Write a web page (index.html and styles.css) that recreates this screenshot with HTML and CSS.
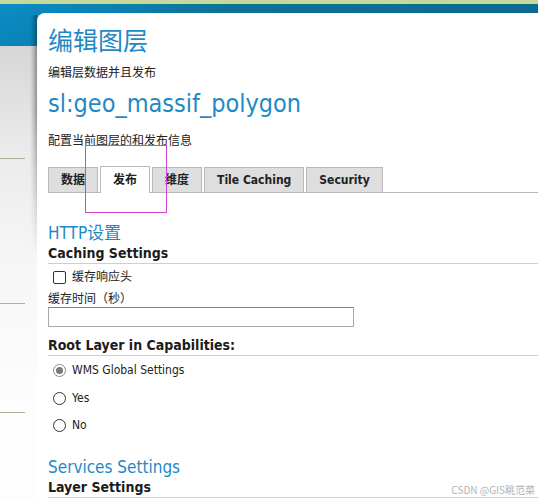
FILE: index.html
```html
<!DOCTYPE html>
<html lang="zh">
<head>
<meta charset="utf-8">
<title>编辑图层</title>
<link rel="stylesheet" href="styles.css">
</head>
<body>
<div class="top-strip"></div>
<div class="header"></div>
<div class="layout">
  <aside class="sidebar">
    <div class="rule r1"></div>
    <div class="rule r2"></div>
    <div class="rule r3"></div>
  </aside>
  <main class="panel">
    <h1 class="title">编辑图层</h1>
    <p class="sub s1">编辑层数据并且发布</p>
    <h2 class="layer-name">sl:geo_massif_polygon</h2>
    <p class="sub s2">配置当前图层的和发布信息</p>
    <div class="tabs">
      <div class="tab">数据</div>
      <div class="tab active">发布</div>
      <div class="tab">维度</div>
      <div class="tab">Tile Caching</div>
      <div class="tab">Security</div>
    </div>
    <h3 class="section http">HTTP设置</h3>
    <h4 class="group">Caching Settings</h4>
    <div class="check-row"><span class="checkbox"></span><span class="label">缓存响应头</span></div>
    <div class="field-label">缓存时间（秒）</div>
    <div class="text-input"></div>
    <h4 class="group root">Root Layer in Capabilities:</h4>
    <div class="radio-row r-1"><span class="radio checked"></span><span class="label">WMS Global Settings</span></div>
    <div class="radio-row r-2"><span class="radio"></span><span class="label">Yes</span></div>
    <div class="radio-row r-3"><span class="radio"></span><span class="label">No</span></div>
    <h3 class="section services">Services Settings</h3>
    <h4 class="group layer">Layer Settings</h4>
  </main>
</div>
<div class="highlight"></div>
<div class="watermark">CSDN @GIS眺范菜</div>
</body>
</html>
```
FILE: styles.css
```css
* { box-sizing: border-box; }
html, body { margin: 0; padding: 0; }
body {
  width: 538px;
  height: 501px;
  overflow: hidden;
  position: relative;
  font-family: "DejaVu Sans Condensed", "DejaVu Sans", "Noto Sans CJK SC", sans-serif;
  color: #222;
  background: linear-gradient(to bottom, #d6d6d6 46px, #e9e9e9 140px, #f6f6f6 260px, #fdfdfd 400px);
}
.top-strip {
  height: 4px;
  background: #c6d99b;
}
.header {
  height: 42px;
  background:
    linear-gradient(to bottom, rgba(0,0,0,0) 0, rgba(0,0,0,0.06) 100%),
    linear-gradient(to right, #0a8dc4 0, #0a84b8 90px, #0d7398 220px, #0b6b90 100%);
}
.layout {
  display: flex;
  margin-top: -33px;
}
.sidebar {
  width: 37px;
  flex: none;
  display: flex;
  flex-direction: column;
}
.rule {
  width: 25px;
  height: 1px;
  background: #a9b198;
}
.r1 { margin-top: 145px; }
.r2 { margin-top: 144px; }
.r3 { margin-top: 108px; }

.panel {
  flex: 1;
  position: relative;
  background: #fff;
  border-top-left-radius: 8px;
  padding: 11px 0 0 11px;
  height: 488px;
}
.panel::before {
  content: "";
  position: absolute;
  left: -7px;
  top: 2px;
  width: 7px;
  height: 240px;
  background: linear-gradient(to right, rgba(0,0,0,0) 0, rgba(0,0,0,0.14) 50%, rgba(0,0,0,0.36) 100%);
  -webkit-mask-image: linear-gradient(to bottom, #000 0, #000 40%, transparent 100%);
  mask-image: linear-gradient(to bottom, #000 0, #000 40%, transparent 100%);
}
.title {
  margin: 0;
  font-family: "Noto Sans CJK SC", sans-serif;
  font-weight: normal;
  font-size: 25px;
  line-height: 30px;
  color: #1f89c6;
}
.sub {
  margin: 0;
  font-family: "Noto Sans CJK SC", sans-serif;
  font-size: 12px;
  line-height: 16px;
  color: #222;
}
.s1 { margin-top: 10px; }
.layer-name {
  margin: 9px 0 0;
  font-weight: normal;
  font-size: 25px;
  line-height: 30px;
  color: #1f89c6;
}
.s2 { margin-top: 13px; }

.tabs {
  margin-top: 18px;
  height: 27px;
  display: flex;
  align-items: flex-end;
  gap: 2px;
  border-bottom: 1px solid #b9b9b9;
}
.tab {
  height: 25px;
  padding: 0 12px;
  border: 1px solid #b9b9b9;
  border-bottom: none;
  background: #dedede;
  font-weight: bold;
  font-size: 12px;
  line-height: 24px;
  color: #222;
  font-family: "DejaVu Sans Condensed", "Noto Sans CJK SC", sans-serif;
}
.tab.active {
  height: 27px;
  margin-bottom: -1px;
  background: #fff;
  line-height: 26px;
}

.section {
  margin: 0;
  font-weight: normal;
  font-size: 17px;
  line-height: 22px;
  color: #1f89c6;
  font-family: "DejaVu Sans Condensed", "Noto Sans CJK SC", sans-serif;
}
.http { margin-top: 29px; }
.services { margin-top: 24px; }
.group {
  margin: 0;
  font-weight: bold;
  font-size: 14px;
  line-height: 18px;
  padding-bottom: 1px;
  border-bottom: 1px solid #c9d8aa;
  color: #1c1c1c;
}
.root { margin-top: 9px; }

.check-row, .radio-row {
  display: flex;
  align-items: center;
  height: 14px;
  font-family: "DejaVu Sans Condensed", "Noto Sans CJK SC", sans-serif;
  font-size: 12px;
}
.check-row { margin-top: 6px; }
.checkbox {
  width: 13px;
  height: 13px;
  margin-left: 5px;
  margin-right: 6px;
  border: 1px solid #333;
  border-radius: 2px;
  background: #fff;
}
.label { line-height: 14px; }
.field-label {
  margin-top: 6px;
  font-family: "Noto Sans CJK SC", sans-serif;
  font-size: 12px;
  line-height: 16px;
}
.text-input {
  margin-top: 1px;
  width: 306px;
  height: 20px;
  border: 1px solid #a8a8a8;
  border-top-color: #858585;
  background: #fff;
}
.r-1 { margin-top: 7px; }
.r-2 { margin-top: 14px; }
.r-3 { margin-top: 13px; }
.radio {
  width: 13px;
  height: 13px;
  margin-left: 5px;
  margin-right: 6px;
  border: 1px solid #333;
  border-radius: 50%;
  background: #fff;
  position: relative;
}
.radio.checked {
  border-color: #8a8a8a;
}
.radio.checked::after {
  content: "";
  position: absolute;
  left: 2px;
  top: 2px;
  width: 7px;
  height: 7px;
  border-radius: 50%;
  background: #7a7a7a;
}

.highlight {
  position: absolute;
  left: 85px;
  top: 145px;
  width: 82px;
  height: 68px;
  border: 1px solid #cf45d2;
}
.watermark {
  position: absolute;
  right: 3px;
  top: 483px;
  font-family: "Noto Sans CJK SC", sans-serif;
  font-size: 10px;
  line-height: 14px;
  color: #b3b3b3;
}
```
